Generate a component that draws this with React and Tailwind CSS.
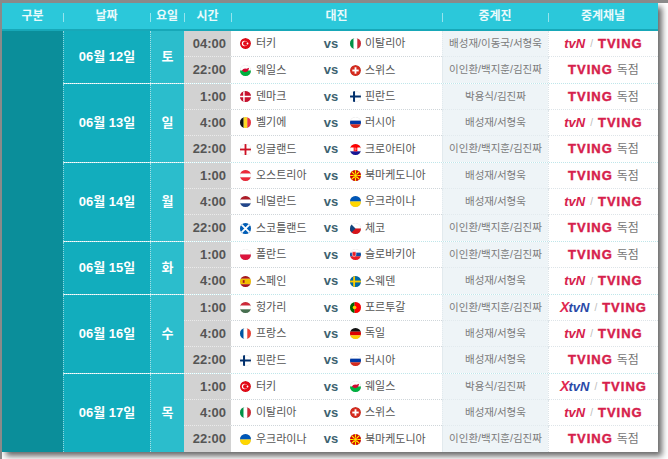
import React from "react";

const F = {
  tr: (
    <>
      <circle cx="6" cy="6" r="6" fill="#e30a17" />
      <circle cx="5" cy="6" r="3" fill="#fff" />
      <circle cx="5.8" cy="6" r="2.4" fill="#e30a17" />
      <circle cx="8.2" cy="6" r="1" fill="#fff" />
    </>
  ),
  it: (
    <>
      <rect x="0" width="4" height="12" fill="#009246" />
      <rect x="4" width="4" height="12" fill="#fff" />
      <rect x="8" width="4" height="12" fill="#ce2b37" />
    </>
  ),
  wa: (
    <>
      <rect width="12" height="6" fill="#fff" />
      <rect y="6" width="12" height="6" fill="#00b140" />
      <path d="M2 6 Q4 3 7 4 L10 3 L9 6 Q8 8 5 8 Z" fill="#d30731" />
    </>
  ),
  ch: (
    <>
      <circle cx="6" cy="6" r="6" fill="#d52b1e" />
      <rect x="5" y="2.5" width="2" height="7" fill="#fff" />
      <rect x="2.5" y="5" width="7" height="2" fill="#fff" />
    </>
  ),
  dk: (
    <>
      <rect width="12" height="12" fill="#c8102e" />
      <rect x="3.5" width="1.6" height="12" fill="#fff" />
      <rect y="5.2" width="12" height="1.6" fill="#fff" />
    </>
  ),
  fi: (
    <>
      <rect width="12" height="12" fill="#fff" />
      <rect x="3.3" width="2.2" height="12" fill="#002f6c" />
      <rect y="4.9" width="12" height="2.2" fill="#002f6c" />
    </>
  ),
  be: (
    <>
      <rect x="0" width="4" height="12" fill="#111" />
      <rect x="4" width="4" height="12" fill="#fdda24" />
      <rect x="8" width="4" height="12" fill="#ef3340" />
    </>
  ),
  ru: (
    <>
      <rect width="12" height="4" fill="#fff" />
      <rect y="4" width="12" height="4" fill="#0039a6" />
      <rect y="8" width="12" height="4" fill="#d52b1e" />
    </>
  ),
  en: (
    <>
      <rect width="12" height="12" fill="#fff" />
      <rect x="5" width="2" height="12" fill="#ce1124" />
      <rect y="5" width="12" height="2" fill="#ce1124" />
    </>
  ),
  hr: (
    <>
      <rect width="12" height="4" fill="#ff0000" />
      <rect y="4" width="12" height="4" fill="#fff" />
      <rect y="8" width="12" height="4" fill="#171796" />
      <rect x="4" y="3" width="4" height="5" fill="#ff0000" />
      <rect x="5" y="4" width="1" height="1" fill="#fff" />
      <rect x="6" y="5" width="1" height="1" fill="#fff" />
      <rect x="5" y="6" width="1" height="1" fill="#fff" />
    </>
  ),
  at: (
    <>
      <rect width="12" height="4" fill="#ed2939" />
      <rect y="4" width="12" height="4" fill="#fff" />
      <rect y="8" width="12" height="4" fill="#ed2939" />
    </>
  ),
  mk: (
    <>
      <rect width="12" height="12" fill="#d20000" />
      <path d="M6 6 L0 0 M6 6 L12 0 M6 6 L0 12 M6 6 L12 12 M6 6 L6 0 M6 6 L6 12 M6 6 L0 6 M6 6 L12 6" stroke="#ffe600" strokeWidth="1.3" />
      <circle cx="6" cy="6" r="2" fill="#ffe600" stroke="#d20000" strokeWidth="0.5" />
    </>
  ),
  nl: (
    <>
      <rect width="12" height="4" fill="#ae1c28" />
      <rect y="4" width="12" height="4" fill="#fff" />
      <rect y="8" width="12" height="4" fill="#21468b" />
    </>
  ),
  ua: (
    <>
      <rect width="12" height="6" fill="#0057b7" />
      <rect y="6" width="12" height="6" fill="#ffd700" />
    </>
  ),
  sc: (
    <>
      <rect width="12" height="12" fill="#005eb8" />
      <path d="M0 0 L12 12 M12 0 L0 12" stroke="#fff" strokeWidth="2" />
    </>
  ),
  cz: (
    <>
      <rect width="12" height="6" fill="#fff" />
      <rect y="6" width="12" height="6" fill="#d7141a" />
      <path d="M0 0 L6 6 L0 12 Z" fill="#11457e" />
    </>
  ),
  pl: (
    <>
      <rect width="12" height="6" fill="#fff" />
      <rect y="6" width="12" height="6" fill="#dc143c" />
    </>
  ),
  sk: (
    <>
      <rect width="12" height="4" fill="#fff" />
      <rect y="4" width="12" height="4" fill="#0b4ea2" />
      <rect y="8" width="12" height="4" fill="#ee1c25" />
      <path d="M2.5 3 H6.5 V7 Q4.5 9.5 2.5 7 Z" fill="#ee1c25" stroke="#fff" strokeWidth="0.6" />
    </>
  ),
  es: (
    <>
      <rect width="12" height="3" fill="#aa151b" />
      <rect y="3" width="12" height="6" fill="#f1bf00" />
      <rect y="9" width="12" height="3" fill="#aa151b" />
      <rect x="3" y="4.5" width="2" height="3" fill="#aa151b" />
    </>
  ),
  se: (
    <>
      <rect width="12" height="12" fill="#006aa7" />
      <rect x="3.5" width="2" height="12" fill="#fecc00" />
      <rect y="5" width="12" height="2" fill="#fecc00" />
    </>
  ),
  hu: (
    <>
      <rect width="12" height="4" fill="#ce2939" />
      <rect y="4" width="12" height="4" fill="#fff" />
      <rect y="8" width="12" height="4" fill="#477050" />
    </>
  ),
  pt: (
    <>
      <rect width="5" height="12" fill="#006600" />
      <rect x="5" width="7" height="12" fill="#ff0000" />
      <circle cx="5" cy="6" r="2" fill="#ffcc00" />
    </>
  ),
  fr: (
    <>
      <rect x="0" width="4" height="12" fill="#0055a4" />
      <rect x="4" width="4" height="12" fill="#fff" />
      <rect x="8" width="4" height="12" fill="#ef4135" />
    </>
  ),
  de: (
    <>
      <rect width="12" height="4" fill="#111" />
      <rect y="4" width="12" height="4" fill="#dd0000" />
      <rect y="8" width="12" height="4" fill="#ffce00" />
    </>
  ),
};

let uid = 0;
function Flag({ c }) {
  const id = `fc${uid++}`;
  return (
    <svg width="11" height="11" viewBox="0 0 12 12" className="shrink-0">
      <defs>
        <clipPath id={id}>
          <circle cx="6" cy="6" r="6" />
        </clipPath>
      </defs>
      <g clipPath={`url(#${id})`}>
        <rect width="12" height="12" fill="#ddd" />
        {F[c]}
      </g>
      <circle cx="6" cy="6" r="5.8" fill="none" stroke="rgba(0,0,0,0.08)" strokeWidth="0.4" />
    </svg>
  );
}

const groups = [
  {
    date: "06월 12일",
    day: "토",
    rows: [
      ["04:00", "tr", "터키", "it", "이탈리아", "배성재/이동국/서형욱", "tvn"],
      ["22:00", "wa", "웨일스", "ch", "스위스", "이인환/백지훈/김진짜", "only"],
    ],
  },
  {
    date: "06월 13일",
    day: "일",
    rows: [
      ["1:00", "dk", "덴마크", "fi", "핀란드", "박용식/김진짜", "only"],
      ["4:00", "be", "벨기에", "ru", "러시아", "배성재/서형욱", "tvn"],
      ["22:00", "en", "잉글랜드", "hr", "크로아티아", "이인환/백지훈/김진짜", "only"],
    ],
  },
  {
    date: "06월 14일",
    day: "월",
    rows: [
      ["1:00", "at", "오스트리아", "mk", "북마케도니아", "배성재/서형욱", "only"],
      ["4:00", "nl", "네덜란드", "ua", "우크라이나", "배성재/서형욱", "tvn"],
      ["22:00", "sc", "스코틀랜드", "cz", "체코", "이인환/백지훈/김진짜", "only"],
    ],
  },
  {
    date: "06월 15일",
    day: "화",
    rows: [
      ["1:00", "pl", "폴란드", "sk", "슬로바키아", "이인환/백지훈/김진짜", "only"],
      ["4:00", "es", "스페인", "se", "스웨덴", "배성재/서형욱", "tvn"],
    ],
  },
  {
    date: "06월 16일",
    day: "수",
    rows: [
      ["1:00", "hu", "헝가리", "pt", "포르투갈", "이인환/백지훈/김진짜", "xtvn"],
      ["4:00", "fr", "프랑스", "de", "독일", "배성재/서형욱", "tvn"],
      ["22:00", "fi", "핀란드", "ru", "러시아", "배성재/서형욱", "only"],
    ],
  },
  {
    date: "06월 17일",
    day: "목",
    rows: [
      ["1:00", "tr", "터키", "wa", "웨일스", "박용식/김진짜", "xtvn"],
      ["4:00", "it", "이탈리아", "ch", "스위스", "배성재/서형욱", "tvn"],
      ["22:00", "ua", "우크라이나", "mk", "북마케도니아", "이인환/백지훈/김진짜", "only"],
    ],
  },
];

const Tving = () => (
  <span className="font-black text-[13px] text-[#d6204b] tracking-[1px] [-webkit-text-stroke:0.4px_#d6204b]">TVING</span>
);

function Channel({ type }) {
  if (type === "only")
    return (
      <span className="flex items-center gap-[4px]">
        <Tving />
        <span className="text-[12px] text-[#777]">독점</span>
      </span>
    );
  return (
    <span className="flex items-center gap-[5px]">
      {type === "xtvn" ? (
        <span className="flex items-center font-black italic text-[13px]">
          <span className="text-[#e0284f] text-[14px] -mr-[1px]">X</span>
          <span className="text-[#2a4aa8]">tvN</span>
        </span>
      ) : (
        <span className="font-black italic text-[13px] text-[#d6204b]">tvN</span>
      )}
      <span className="text-[10px] text-[#bbb]">/</span>
      <Tving />
    </span>
  );
}

function Row({ r, last }) {
  const [time, f1, t1, f2, t2, caster, ch] = r;
  const line = last ? "" : "border-b border-dotted border-[#cfd6da]";
  return (
    <div className="flex h-[26px]">
      <div className={`w-[47px] bg-[#d2d2d2] flex items-center justify-end pr-[5px] text-[13px] font-bold text-[#555] ${last ? "" : "border-b border-dotted border-[#eaeaea]"}`}>
        {time}
      </div>
      <div className={`w-[211px] bg-white flex items-center ${line}`}>
        <div className="w-[87px] shrink-0 min-w-0 pl-[9px] flex items-center gap-[5px] text-[11px] text-[#555]">
          <Flag c={f1} />
          <span className="whitespace-nowrap">{t1}</span>
        </div>
        <div className="w-[26px] shrink-0 text-center text-[13px] font-bold text-[#3d6270]">vs</div>
        <div className="flex-1 min-w-0 pl-[6px] flex items-center gap-[4px] text-[11px] text-[#555]">
          <Flag c={f2} />
          <span className="whitespace-nowrap">{t2}</span>
        </div>
      </div>
      <div className={`w-[106px] bg-[#eef4f7] flex items-center justify-center text-[10.5px] text-[#7a7a7a] border-l border-[#e2eaee] ${line}`}>
        {caster}
      </div>
      <div className={`w-[110px] bg-white flex items-center justify-center border-l border-dotted border-[#dde4e8] ${line}`}>
        <Channel type={ch} />
      </div>
    </div>
  );
}

export default function App() {
  const heads = [
    ["구분", "w-[61px]"],
    ["날짜", "w-[87px]"],
    ["요일", "w-[34px]"],
    ["시간", "w-[47px]"],
    ["대진", "w-[211px]"],
    ["중계진", "w-[106px]"],
    ["중계채널", "w-[110px]"],
  ];
  return (
    <div
      className="w-[668px] h-[459px] bg-white border-t-[3px] border-l-2 border-[#8a8a8a] overflow-hidden"
      style={{ fontFamily: '"Liberation Sans", "Noto Sans CJK KR", sans-serif' }}
    >
      <div className="w-[656px] shadow-[4px_4px_6px_rgba(0,0,0,0.6)]">
        <div className="flex h-[28px] bg-[#2bc8da] border-b-2 border-[#17a8b8]">
          {heads.map(([h, w], i) => (
            <div key={h} className={`${w} relative flex items-center justify-center text-[12px] font-bold text-white/90`}>
              {h}
              {i > 0 && <span className="absolute left-0 top-[10px] h-[9px] w-px bg-white/50" />}
            </div>
          ))}
        </div>
        <div className="flex">
          <div className="w-[61px] bg-[#0b8e9a]" />
          <div className="flex flex-col">
            {groups.map((g, gi) => (
              <div key={g.date} className={`flex ${gi < groups.length - 1 ? "border-b border-dotted border-[#bfe6ea]" : ""}`}>
                <div className="w-[87px] bg-[#12adbd] border-l border-dotted border-[#8fd6de] flex items-center justify-center text-[13px] font-bold text-white">
                  {g.date}
                </div>
                <div className="w-[34px] bg-[#2bbdcc] border-l border-dotted border-[#a5e0e6] flex items-center justify-center text-[13px] font-bold text-white">
                  {g.day}
                </div>
                <div className="flex flex-col">
                  {g.rows.map((r, i) => (
                    <Row key={i} r={r} last={i === g.rows.length - 1} />
                  ))}
                </div>
              </div>
            ))}
          </div>
        </div>
      </div>
    </div>
  );
}
